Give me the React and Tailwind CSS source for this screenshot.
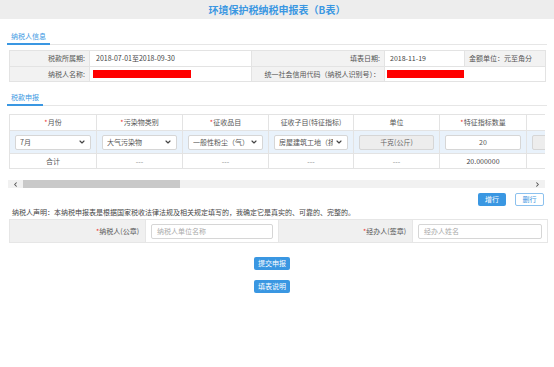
import { ChevronDown, ChevronLeft, ChevronRight } from 'lucide-react';

const font = { fontFamily: '"Noto Sans CJK SC", "Noto Sans", sans-serif' };

function Tab({ label, width }) {
  return (
    <div className="flex h-[15px] border-b border-[#e6e6e6]">
      <div className={`${width} h-[15px] border-b-2 border-[#3a97e2] flex items-center justify-center text-[7px] text-[#3a97e2] leading-none`}>
        {label}
      </div>
    </div>
  );
}

function Req({ children }) {
  return (
    <span>
      <span className="text-[#e33]">*</span>
      {children}
    </span>
  );
}

function Select({ value }) {
  return (
    <div className="h-[15px] mx-[5px] bg-white border border-[#d6d6d6] rounded-[2px] flex items-center px-[4px] gap-[2px] text-[7px] text-[#555] whitespace-nowrap">
      <span className="flex-1 min-w-0 overflow-hidden leading-[11px]">{value}</span>
      <ChevronDown className="w-[8px] h-[8px] shrink-0 text-[#444]" strokeWidth={3.5} />
    </div>
  );
}

export default function App() {
  return (
    <div className="w-[554px] h-[367px] bg-white text-[#555] overflow-hidden" style={font}>
      <div className="h-[19px] bg-[#ededed] flex items-center justify-center">
        <span className="text-[10px] font-bold text-[#3a97e2] leading-none">环境保护税纳税申报表（B表）</span>
      </div>

      <div className="px-[7px]">
        <div className="mt-[11px]">
          <Tab label="纳税人信息" width="w-[43px]" />
        </div>

        <table className="mt-[5px] ml-[2px] w-[536px] border-collapse table-fixed text-[7px] leading-none">
          <colgroup>
            <col className="w-[80px]" />
            <col className="w-[162px]" />
            <col className="w-[133px]" />
            <col className="w-[80px]" />
            <col className="w-[81px]" />
          </colgroup>
          <tbody>
            <tr className="h-[16px]">
              <td className="border border-[#e3e3e3] bg-[#f2f2f2] text-right pr-[4px]">税款所属期:</td>
              <td className="border border-[#e3e3e3] pl-[6px] text-[#444]">2018-07-01至2018-09-30</td>
              <td className="border border-[#e3e3e3] bg-[#f2f2f2] text-right pr-[4px]">填表日期:</td>
              <td className="border border-[#e3e3e3] pl-[5px] text-[#444]">2018-11-19</td>
              <td className="border border-[#e3e3e3] bg-[#f2f2f2] pl-[4px] whitespace-nowrap">金额单位：元至角分</td>
            </tr>
            <tr className="h-[15px]">
              <td className="border border-[#e3e3e3] bg-[#f2f2f2] text-right pr-[4px]">纳税人名称:</td>
              <td className="border border-[#e3e3e3] pl-[3px]">
                <div className="w-[98px] h-[8px] bg-[#ff0000]" />
              </td>
              <td className="border border-[#e3e3e3] bg-[#f2f2f2] text-right pr-[4px] whitespace-nowrap">统一社会信用代码（纳税人识别号）：</td>
              <td colSpan={2} className="border border-[#e3e3e3] pl-[2px]">
                <div className="w-[77px] h-[8px] bg-[#ff0000]" />
              </td>
            </tr>
          </tbody>
        </table>

        <div className="mt-[9px]">
          <Tab label="税款申报" width="w-[36px]" />
        </div>

        <div className="mt-[8px] ml-[2px] w-[536px] overflow-hidden">
          <table className="w-[577px] border-collapse table-fixed text-[7px] leading-none">
            <colgroup>
              <col className="w-[87px]" />
              <col className="w-[86px]" />
              <col className="w-[86px]" />
              <col className="w-[85px]" />
              <col className="w-[86px]" />
              <col className="w-[87px]" />
              <col className="w-[60px]" />
            </colgroup>
            <tbody>
              <tr className="h-[16px] text-center">
                <td className="border border-[#e3e3e3]"><Req>月份</Req></td>
                <td className="border border-[#e3e3e3]"><Req>污染物类别</Req></td>
                <td className="border border-[#e3e3e3]"><Req>征收品目</Req></td>
                <td className="border border-[#e3e3e3] whitespace-nowrap">征收子目(特征指标)</td>
                <td className="border border-[#e3e3e3]">单位</td>
                <td className="border border-[#e3e3e3]"><Req>特征指标数量</Req></td>
                <td className="border border-[#e3e3e3]"></td>
              </tr>
              <tr className="h-[23px] bg-[#e9f2fb]">
                <td className="border border-[#e3e3e3]"><Select value="7月" /></td>
                <td className="border border-[#e3e3e3]"><Select value="大气污染物" /></td>
                <td className="border border-[#e3e3e3]"><Select value="一般性粉尘（气）" /></td>
                <td className="border border-[#e3e3e3]"><Select value="房屋建筑工地（扬尘）" /></td>
                <td className="border border-[#e3e3e3]">
                  <div className="h-[15px] mx-[5px] bg-[#ededed] border border-[#d6d6d6] rounded-[2px] flex items-center justify-center text-[#666]">千克(公斤)</div>
                </td>
                <td className="border border-[#e3e3e3]">
                  <div className="h-[15px] mx-[5px] bg-white border border-[#d6d6d6] rounded-[2px] flex items-center justify-center text-[#555]">20</div>
                </td>
                <td className="border border-[#e3e3e3]">
                  <div className="h-[15px] mx-[5px] bg-[#ededed] border border-[#d6d6d6] rounded-[2px]" />
                </td>
              </tr>
              <tr className="h-[15px] text-center">
                <td className="border border-[#e3e3e3]">合计</td>
                <td className="border border-[#e3e3e3] text-[#888]">---</td>
                <td className="border border-[#e3e3e3] text-[#888]">---</td>
                <td className="border border-[#e3e3e3] text-[#888]">---</td>
                <td className="border border-[#e3e3e3] text-[#888]">---</td>
                <td className="border border-[#e3e3e3] text-[#444]">20.000000</td>
                <td className="border border-[#e3e3e3]"></td>
              </tr>
            </tbody>
          </table>
        </div>

        <div className="mt-[11px] ml-[1px] w-[537px] h-[8px] bg-[#f1f1f1] flex items-center">
          <div className="w-[15px] flex justify-center">
            <ChevronLeft className="w-[7px] h-[7px] text-[#505050]" strokeWidth={3.5} />
          </div>
          <div className="w-[157px] h-[8px] bg-[#c9c9c9]" />
          <div className="flex-1" />
          <div className="w-[15px] flex justify-center">
            <ChevronRight className="w-[7px] h-[7px] text-[#505050]" strokeWidth={3.5} />
          </div>
        </div>

        <div className="mt-[5px] flex justify-end gap-[9px] pr-[3px]">
          <button className="w-[28px] h-[13px] bg-[#3a97e2] rounded-[2px] text-white text-[7px] leading-none">增行</button>
          <button className="w-[29px] h-[13px] bg-white border border-[#8cc1ee] rounded-[2px] text-[#3a97e2] text-[7px] leading-none">删行</button>
        </div>

        <div className="h-[12px] pl-[5px] flex items-center text-[7px] text-[#444] leading-none whitespace-nowrap">
          纳税人声明：本纳税申报表是根据国家税收法律法规及相关规定填写的，我确定它是真实的、可靠的、完整的。
        </div>

        <table className="mt-[1px] ml-[2px] w-[538px] border-collapse table-fixed text-[7px] leading-none">
          <colgroup>
            <col className="w-[136px]" />
            <col className="w-[133px]" />
            <col className="w-[134px]" />
            <col className="w-[135px]" />
          </colgroup>
          <tbody>
            <tr className="h-[23px]">
              <td className="border border-[#e6e6e6] bg-[#f0f0f0] text-right pr-[6px]"><Req>纳税人(公章)</Req></td>
              <td className="border border-[#e6e6e6] pl-[5px] pr-[5px]">
                <div className="h-[15px] border border-[#d6d6d6] rounded-[2px] flex items-center px-[5px] text-[#aaa]">纳税人单位名称</div>
              </td>
              <td className="border border-[#e6e6e6] bg-[#f0f0f0] text-right pr-[6px]"><Req>经办人(签章)</Req></td>
              <td className="border border-[#e6e6e6] pl-[5px] pr-[5px]">
                <div className="h-[15px] border border-[#d6d6d6] rounded-[2px] flex items-center px-[5px] text-[#aaa]">经办人姓名</div>
              </td>
            </tr>
          </tbody>
        </table>

        <div className="mt-[14px] flex flex-col items-center gap-[10px] pr-[10px]">
          <button className="w-[36px] h-[13px] bg-[#3a97e2] rounded-[2px] text-white text-[7px] leading-none">提交申报</button>
          <button className="w-[36px] h-[13px] bg-[#3a97e2] rounded-[2px] text-white text-[7px] leading-none">填表说明</button>
        </div>
      </div>
    </div>
  );
}
